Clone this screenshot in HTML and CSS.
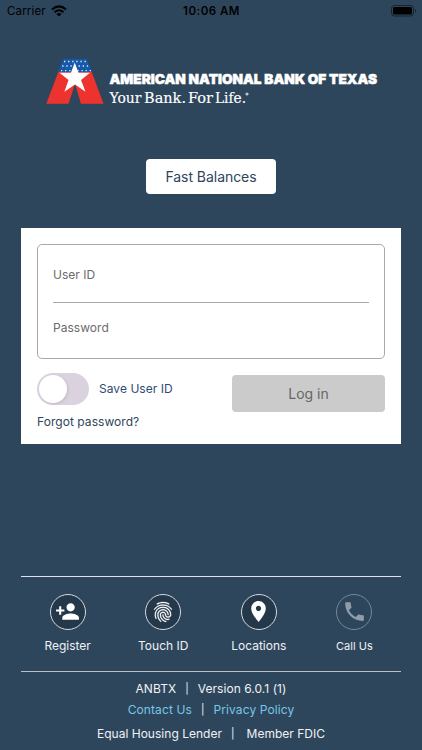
FILE: index.html
```html
<!DOCTYPE html>
<html lang="en">
<head>
<meta charset="utf-8">
<title>American National Bank of Texas</title>
<link rel="stylesheet" href="styles.css">
</head>
<body>
<div class="screen">
  <header class="status">
    <div class="carrier"><span>Carrier</span>
      <svg width="16" height="12" viewBox="0 0 16 12" fill="none" stroke="#000"><path d="M1 4.5Q8-1.7 15 4.5" stroke-width="2.2"/><path d="M3.5 7.2Q8 3.3 12.5 7.2" stroke-width="2"/><path d="M5.4 8.9Q8 7 10.6 8.9L8 11.5z" fill="#000" stroke="none"/></svg>
    </div>
    <div class="time">10:06 AM</div>
    <svg class="battery" width="26" height="12" viewBox="0 0 26 12"><rect x=".5" y=".5" width="22" height="10.5" rx="3" fill="none" stroke="#17222d"/><rect x="2" y="2" width="19" height="7.5" rx="1.5"/><path d="M24 4v3.5q1.200-.4 1.200-1.750T24 4" fill="#17222d"/></svg>
  </header>

  <svg class="logo" width="342" height="65" viewBox="0 0 342 65" role="img">
    <path fill="#ee332f" d="M18.500 21.500H51.500L63.500 53.700H41L35 34L28.500 53.700H6.300z"/>
    <path fill="#1659a8" d="M23.300 9H46.800L52 22H18z"/>
    <g fill="none" stroke="#dcecff" stroke-width="1.300" stroke-dasharray="1.300 2.800"><path d="M24 11.500h22M22.200 16h26M21 20.600h30"/></g>
    <path fill="#fff" d="M34.700 12.500L38.500 22.700H50L41 30L45.500 41.700L35 34.500L24.400 41.700L28.500 30L19.500 22.700H31z"/>
    <text class="brand" x="69.500" y="33.500" textLength="267.500" lengthAdjust="spacingAndGlyphs">AMERICAN NATIONAL BANK OF TEXAS</text>
    <text class="tagline" x="69.500" y="53" textLength="32" lengthAdjust="spacingAndGlyphs">Your</text>
    <text class="tagline" x="104" y="53" textLength="42" lengthAdjust="spacingAndGlyphs">Bank.</text>
    <text class="tagline" x="148" y="53" textLength="25" lengthAdjust="spacingAndGlyphs">For</text>
    <text class="tagline" x="175" y="53" textLength="31" lengthAdjust="spacingAndGlyphs">Life.</text>
    <circle cx="207" cy="44" r="1.600" fill="#b9c3cc"/>
  </svg>

  <button class="fast"><span>Fast Balances</span></button>

  <main class="card">
    <div class="fields">
      <div class="field user"><span>User ID</span></div>
      <div class="field"><span>Password</span></div>
    </div>
    <div class="actions">
      <div class="options">
        <div class="save"><div class="toggle"><div class="knob"></div></div><span>Save User ID</span></div>
        <div class="forgot"><span>Forgot password?</span></div>
      </div>
      <button class="login"><span>Log in</span></button>
    </div>
  </main>

  <nav class="nav">
    <div class="item">
      <div class="circle"><svg width="25" height="25" viewBox="0 0 24 24"><path d="M15 12c2.210 0 4-1.790 4-4s-1.790-4-4-4-4 1.790-4 4 1.790 4 4 4zm-9-2V7H4v3H1v2h3v3h2v-3h3v-2H6zm9 4c-2.670 0-8 1.340-8 4v2h16v-2c0-2.660-5.330-4-8-4z"/></svg></div>
      <span class="l-register">Register</span>
    </div>
    <div class="item">
      <div class="circle print"><svg width="24" height="24" viewBox="0 0 24 24"><path d="M17.810 4.470c-.08 0-.16-.02-.23-.06C15.660 3.420 14 3 12.010 3c-1.980 0-3.860.47-5.570 1.410-.24.13-.54.04-.68-.2-.13-.24-.04-.55.2-.68C7.820 2.520 9.860 2 12.010 2c2.130 0 3.990.47 6.030 1.520.25.13.34.43.21.67-.09.18-.26.28-.44.28zM3.500 9.720c-.1 0-.2-.03-.29-.09-.23-.16-.28-.47-.12-.7.99-1.400 2.250-2.500 3.750-3.270C9.980 4.040 14 4.030 17.150 5.650c1.500.77 2.760 1.860 3.750 3.250.16.22.11.54-.12.7-.23.16-.54.11-.7-.12-.9-1.260-2.040-2.250-3.390-2.940-2.870-1.470-6.540-1.470-9.400.01-1.360.7-2.500 1.700-3.400 2.960-.08.14-.23.21-.39.21zm6.250 12.070c-.13 0-.26-.05-.35-.15-.87-.87-1.340-1.430-2.010-2.640-.69-1.230-1.050-2.730-1.050-4.340 0-2.970 2.540-5.390 5.660-5.390s5.660 2.420 5.660 5.390c0 .28-.22.5-.5.5s-.5-.22-.5-.5c0-2.420-2.090-4.390-4.660-4.390-2.570 0-4.660 1.970-4.660 4.390 0 1.440.32 2.770.93 3.850.64 1.150 1.080 1.640 1.850 2.420.19.2.19.51 0 .71-.11.1-.24.15-.37.15zm7.170-1.850c-1.190 0-2.240-.3-3.100-.89-1.490-1.010-2.380-2.650-2.380-4.390 0-.28.22-.5.5-.5s.5.22.5.5c0 1.410.72 2.740 1.940 3.560.71.48 1.540.71 2.540.71.24 0 .64-.03 1.040-.1.27-.05.53.13.58.41.05.27-.13.53-.41.58-.57.11-1.070.12-1.210.12zM14.910 22c-.04 0-.09-.01-.13-.02-1.590-.44-2.630-1.030-3.720-2.100-1.400-1.390-2.170-3.240-2.170-5.220 0-1.620 1.380-2.940 3.080-2.940 1.700 0 3.080 1.320 3.080 2.940 0 1.070.93 1.940 2.080 1.940s2.080-.87 2.080-1.940c0-3.770-3.250-6.830-7.250-6.830-2.840 0-5.440 1.580-6.610 4.030-.39.81-.59 1.760-.59 2.800 0 .78.07 2.010.67 3.610.1.26-.03.55-.29.64-.26.1-.55-.04-.64-.29-.49-1.310-.73-2.610-.73-3.960 0-1.200.23-2.290.68-3.240 1.330-2.790 4.280-4.600 7.510-4.600 4.550 0 8.250 3.510 8.250 7.830 0 1.620-1.380 2.940-3.080 2.940s-3.080-1.320-3.080-2.940c0-1.070-.93-1.940-2.080-1.940s-2.080.87-2.080 1.940c0 1.710.66 3.310 1.870 4.510.95.94 1.860 1.460 3.270 1.850.27.07.42.35.35.61-.05.23-.26.38-.47.38z"/></svg></div>
      <span class="l-touch">Touch ID</span>
    </div>
    <div class="item">
      <div class="circle"><svg width="25" height="25" viewBox="0 0 24 24"><path d="M12 2C8.130 2 5 5.130 5 9c0 5.250 7 13 7 13s7-7.750 7-13c0-3.870-3.130-7-7-7zm0 9.500c-1.380 0-2.500-1.120-2.500-2.500s1.120-2.500 2.500-2.500 2.500 1.120 2.500 2.500-1.120 2.500-2.500 2.500z"/></svg></div>
      <span class="l-loc">Locations</span>
    </div>
    <div class="item">
      <div class="circle off"><svg width="25" height="25" viewBox="0 0 24 24"><path d="M6.620 10.790c1.440 2.830 3.760 5.140 6.590 6.590l2.200-2.200c.27-.27.67-.36 1.020-.24 1.120.37 2.330.57 3.570.57.55 0 1 .45 1 1V20c0 .55-.45 1-1 1-9.390 0-17-7.610-17-17 0-.55.45-1 1-1h3.500c.55 0 1 .45 1 1 0 1.250.2 2.450.57 3.570.11.35.03.74-.25 1.020l-2.200 2.200z"/></svg></div>
      <span class="l-call">Call Us</span>
    </div>
  </nav>

  <footer class="foot">
    <div class="row r1"><span>ANBTX</span><span class="bar">|</span><span>Version 6.0.1 (1)</span></div>
    <div class="row r2"><a>Contact Us</a><span class="bar">|</span><a>Privacy Policy</a></div>
    <div class="row r3"><span>Equal Housing Lender</span><span class="bar">|</span><span>Member FDIC</span></div>
  </footer>
</div>
</body>
</html>
```
FILE: styles.css
```css
* { box-sizing: border-box; }
body { margin: 0; font-family: Inter, "Liberation Sans", sans-serif; }
button { border: 0; padding: 0; font: inherit; }
.screen { width: 422px; height: 750px; background: #2e465c; display: flex; flex-direction: column; align-items: center; overflow: hidden; }

.status { width: 100%; height: 22px; display: grid; grid-template-columns: 1fr auto 1fr; align-items: center; padding: 0 5px 0 7px; font-size: 11.5px; color: #000; }
.carrier { display: flex; align-items: center; gap: 5px; letter-spacing: .15px; }
.time { font-weight: 600; letter-spacing: .5px; margin-left: -1px; }
.battery { justify-self: end; }

.logo { flex: none; margin-top: 28px; }
.brand { font: 900 13.5px Inter, sans-serif; fill: #fff; stroke: #fff; stroke-width: .5px; }
.tagline { font: 14.5px "DejaVu Serif", serif; fill: #fff; stroke: #fff; stroke-width: .15px; }

.fast { flex: none; width: 130px; height: 35px; margin-top: 44px; border-radius: 4px; background: #fff; color: #2e465c; font-size: 14px; letter-spacing: -.05px; }

.card { flex: none; width: 380px; height: 216px; margin-top: 34px; padding: 16px; background: #fff; }
.fields { height: 115px; border: 1px solid #a9a9a9; border-radius: 5px; padding: 0 15px; }
.field { height: 49px; display: flex; align-items: center; font-size: 12px; letter-spacing: .03px; color: #6b6b6b; }
.user { height: 58px; padding-top: 1px; border-bottom: 1px solid #a9a9a9; }
.actions { display: flex; justify-content: space-between; margin-top: 14px; }
.save { display: flex; align-items: center; gap: 10px; font-size: 12px; letter-spacing: .05px; color: #2f4b73; }
.save span { margin-top: -1px; }
.toggle { width: 52px; height: 32px; padding: 2px; border-radius: 16px; background: #dad3df; }
.knob { width: 28px; height: 28px; border-radius: 50%; background: #fff; box-shadow: 1px 1px 3px rgba(60, 40, 80, .15); }
.forgot { margin-top: 9px; font-size: 12px; line-height: 16px; letter-spacing: .05px; color: #2e465c; }
.login { width: 153px; height: 37px; margin-top: 2px; border-radius: 4px; background: #cbcbcb; color: #666; font-size: 14px; letter-spacing: 0; }

.nav { flex: none; width: 380px; height: 96px; margin-top: 132px; border-top: 1px solid #dce3ee; border-bottom: 1px solid #b8c0c9; display: grid; grid-template-columns: repeat(4, 95.600px); justify-content: center; }
.item { display: flex; flex-direction: column; align-items: center; padding-top: 16.500px; color: #eef1f5; font-size: 12px; line-height: 16px; }
.circle { width: 36px; height: 36px; margin-bottom: 8px; border: 1px solid #d4dae0; border-radius: 50%; background: #24384a; display: flex; align-items: center; justify-content: center; }
.circle svg { flex: none; fill: #fff; }
.print svg { stroke: #fff; stroke-width: .25px; }
.off { background: none; border-color: #74879a; }
.circle.off svg { fill: #8f9caa; }
.l-call { font-size: 11px; }

.foot { width: 100%; display: flex; flex-direction: column; font-size: 12px; color: #eef1f5; }
.row { display: flex; justify-content: center; gap: 9px; line-height: 16px; }
.bar { font-size: 10.5px; }
.r1 { margin-top: 9px; letter-spacing: .05px; }
.r2 { margin-top: 5px; letter-spacing: .1px; }
.r2 a { color: #77c6e6; }
.r3 { margin-top: 8px; letter-spacing: .02px; }
.r3 span:last-child { margin-left: 3px; }
```
